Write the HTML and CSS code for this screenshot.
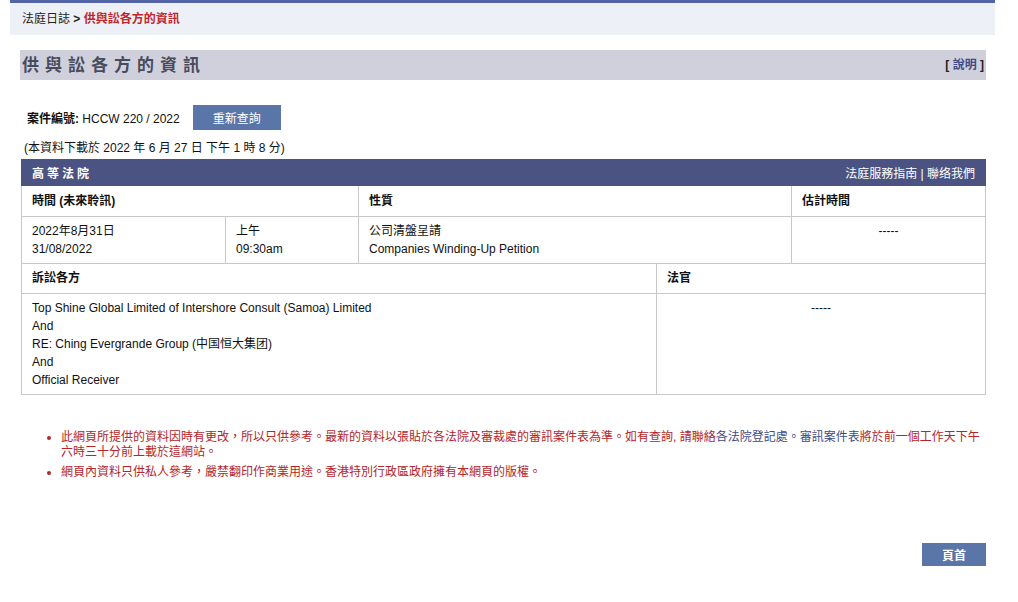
FILE: index.html
```html
<!DOCTYPE html>
<html lang="zh-HK">
<head>
  <meta charset="UTF-8" />
  <meta name="viewport" content="width=device-width, initial-scale=1.0" />
  <title>供與訟各方的資訊</title>
  <link rel="stylesheet" href="styles.css">
</head>
<body>
  <div class="topline"></div>
  <div class="crumb">法庭日誌 <b>&gt;</b> <span class="here">供與訟各方的資訊</span></div>

  <div class="page">
    <div class="titlebar">
      <h1>供與訟各方的資訊</h1>
      <span class="help">[ <a href="#">說明</a> ]</span>
    </div>

    <div class="caseno">
      <span><b>案件編號:</b> HCCW 220 / 2022</span>
      <button class="btn">重新查詢</button>
    </div>
    <p class="stamp">(本資料下載於 2022 年 6 月 27 日 下午 1 時 8 分)</p>

    <div class="court">
      <span class="court-name">高等法院</span>
      <span class="court-links"><a href="#">法庭服務指南</a> | <a href="#">聯络我們</a></span>
    </div>

    <table class="grid">
      <tr class="head">
        <th colspan="2">時間 (未來聆訊)</th>
        <th>性質</th>
        <th class="w-est">估計時間</th>
      </tr>
      <tr class="row2">
        <td class="w-date">2022年8月31日<br>31/08/2022</td>
        <td class="w-time">上午<br>09:30am</td>
        <td>公司清盤呈請<br>Companies Winding-Up Petition</td>
        <td class="center">-----</td>
      </tr>
    </table>

    <table class="grid">
      <tr class="head">
        <th>訴訟各方</th>
        <th class="w-judge">法官</th>
      </tr>
      <tr class="parties">
        <td>Top Shine Global Limited of Intershore Consult (Samoa) Limited<br>And<br>RE: Ching Evergrande Group (中国恒大集团)<br>And<br>Official Receiver</td>
        <td class="center">-----</td>
      </tr>
    </table>

    <ul class="notes">
      <li>此網頁所提供的資料因時有更改，所以只供參考。最新的資料以張貼於各法院及審裁處的審訊案件表為準。如有查詢, 請聯絡<a href="#">各法院登記處</a><span class="navy">。審訊案件表</span>將於前一個工作天下午六時三十分前上載於這網站。</li>
      <li>網頁內資料只供私人參考，嚴禁翻印作商業用途。香港特別行政區政府擁有本網頁的版權。</li>
    </ul>

    <div class="foot">
      <button class="btn btn-top">頁首</button>
    </div>
  </div>
</body>
</html>
```

FILE: styles.css
```css
* { box-sizing: border-box; margin: 0; padding: 0; }
body {
  font-family: "Liberation Sans", Arial, "Noto Sans CJK TC", sans-serif;
  font-size: 12px;
  color: #111;
  background: #fff;
}
a { text-decoration: none; }

.topline {
  height: 3px;
  width: 985px;
  margin-left: 10px;
  background: #5364a6;
}
.crumb {
  width: 985px;
  margin-left: 10px;
  height: 32px;
  line-height: 32px;
  padding-left: 12px;
  background: #eef0f7;
  color: #222;
}
.crumb .here { color: #c0262b; font-weight: bold; }

.page {
  width: 966px;
  margin-left: 20px;
}
.titlebar {
  margin-top: 15px;
  height: 30px;
  display: flex;
  align-items: center;
  justify-content: space-between;
  padding: 0 2px 3px 2px;
  background: #cfd0dc;
}
.titlebar h1 {
  font-size: 17px;
  letter-spacing: 6px;
  color: #474b5c;
}
.help { font-weight: bold; color: #222; }
.help a { color: #3e4a87; }

.caseno {
  margin-top: 25px;
  display: flex;
  align-items: center;
  gap: 13px;
  padding-left: 7px;
}
.btn {
  background: #5a76a8;
  color: #fff;
  border: none;
  font: inherit;
  height: 25px;
  width: 88px;
  cursor: pointer;
}
.stamp { margin-top: 8px; padding-left: 4px; }

.court {
  margin-top: 4px;
  height: 27px;
  margin-left: 1px;
  display: flex;
  align-items: center;
  justify-content: space-between;
  padding: 0 11px;
  background: #4b5382;
  color: #fff;
}
.court-name { font-weight: bold; letter-spacing: 3px; }
.court-links a { color: #fff; }

.grid {
  width: 965px;
  margin-left: 1px;
  border-collapse: collapse;
}
.grid th, .grid td {
  border: 1px solid #c8c8c8;
  padding: 0 10px;
  text-align: left;
  vertical-align: top;
  line-height: 18px;
}
.grid th { height: 30px; vertical-align: middle; font-weight: bold; }
.grid tr.head th { border-top: none; }
.row2 td { height: 47px; padding-top: 5px; }
.parties td { height: 101px; padding-top: 5px; }
.grid .center { text-align: center; }
.w-date { width: 204px; }
.w-time { width: 133px; }
.w-est { width: 194px; }
.w-judge { width: 329px; }

.notes {
  margin-top: 35px;
  padding-left: 41px;
  color: #b3262a;
  line-height: 15px;
}
.notes li { margin-bottom: 5px; }
.notes a, .notes .navy { color: #3e4a87; }

.foot {
  margin-top: 63px;
  display: flex;
  justify-content: flex-end;
}
.btn-top { width: 64px; height: 23px; font-weight: bold; }
```
